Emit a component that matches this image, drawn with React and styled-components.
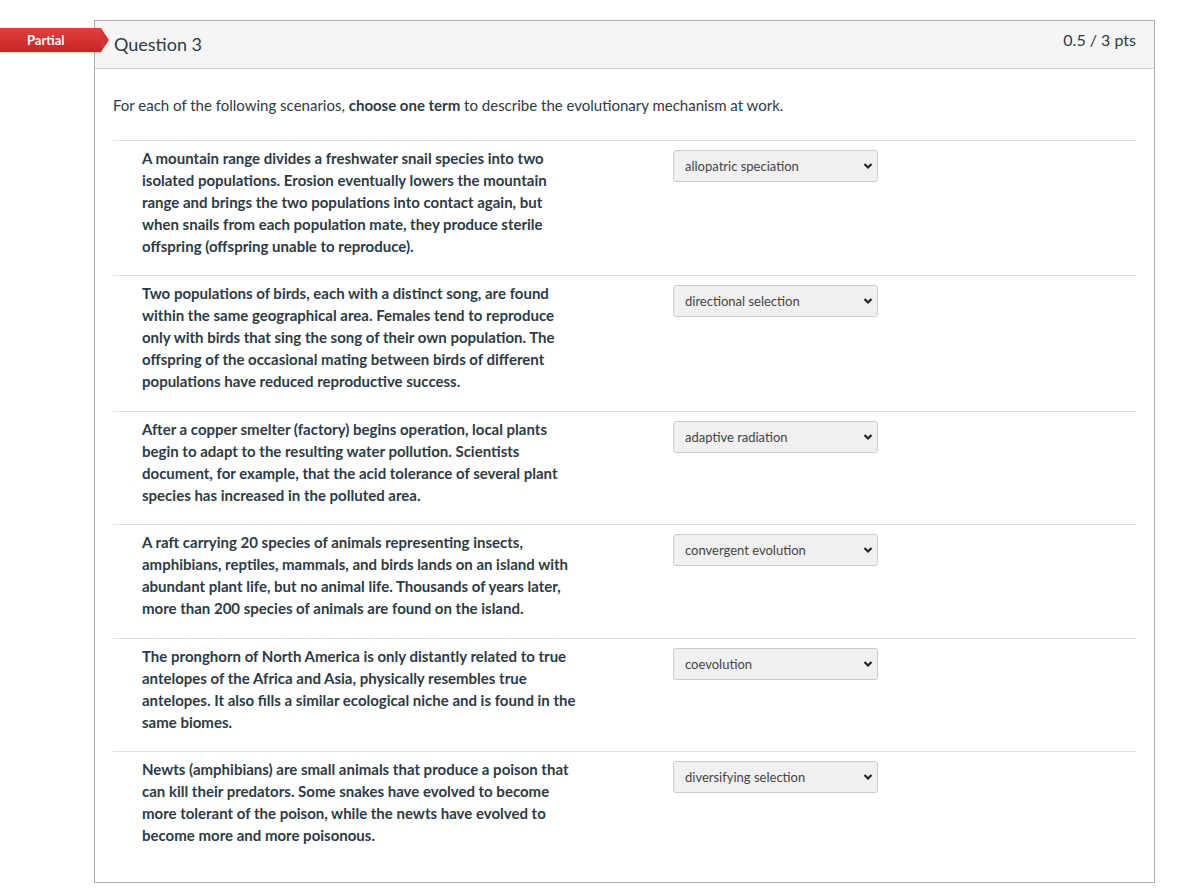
import React from 'react';
import styled, { createGlobalStyle } from 'styled-components';

const Global = createGlobalStyle`
  body {
    margin: 0;
    background: #fff;
    font-family: Lato, "Liberation Sans", sans-serif;
    color: #2d3b45;
  }
`;

const Page = styled.div`
  padding: 20px 32px 8px 94px;
`;

const Card = styled.div`
  position: relative;
  width: 1061px;
  box-sizing: border-box;
  border: 1px solid #a5afb5;
  background: #fff;
`;

const Badge = styled.div`
  position: absolute;
  left: -95px;
  top: 7px;
  width: 101px;
  height: 24px;
  background: linear-gradient(#e2403f, #c72626);
  color: #fff;
  font-size: 13px;
  font-weight: 700;
  display: flex;
  align-items: center;
  padding-left: 27px;
  box-sizing: border-box;
  box-shadow: 0 1px 2px rgba(0, 0, 0, 0.25);
  &::after {
    content: '';
    position: absolute;
    right: -8px;
    top: 0;
    border-top: 12px solid transparent;
    border-bottom: 12px solid transparent;
    border-left: 8px solid #d53434;
  }
`;

const Header = styled.div`
  height: 47px;
  background: #f5f5f5;
  border-bottom: 1px solid #c7cdd1;
  display: flex;
  align-items: center;
  justify-content: space-between;
  padding: 0 18px 0 19px;
`;

const Title = styled.div`
  font-size: 18px;
  margin-top: -1px;
`;

const Points = styled.div`
  font-size: 16px;
  color: #2d3b45;
  margin-top: -10px;
`;

const Body = styled.div`
  padding: 26px 18px 36px 18px;
`;

const Intro = styled.div`
  font-size: 15px;
  line-height: 20px;
  margin-bottom: 25px;
  b {
    font-weight: 700;
  }
`;

const Row = styled.div`
  display: flex;
  align-items: flex-start;
  border-top: 1px solid #dde1e3;
  padding: 6px 0 ${p => (p.last ? 0 : 18.4)}px 29px;
`;

const Scenario = styled.div`
  width: 437px;
  font-size: 15px;
  font-weight: 700;
  line-height: 22px;
  color: #2d3b45;
`;

const SelectBox = styled.div`
  margin-left: 94px;
  margin-top: 3px;
  width: 205px;
  height: 32px;
  box-sizing: border-box;
  border: 1px solid #c7cdd1;
  border-radius: 3px;
  background: #f0f0f0;
  display: flex;
  align-items: center;
  justify-content: space-between;
  padding: 0 4px 0 11px;
  font-size: 13px;
  color: #444;
`;

const Chevron = () => (
  <svg width="10" height="8" viewBox="0 0 10 8">
    <path d="M1.5 2 L5 5.5 L8.5 2" fill="none" stroke="#222" strokeWidth="2.2" />
  </svg>
);

const rows = [
  {
    text: 'A mountain range divides a freshwater snail species into two isolated populations. Erosion eventually lowers the mountain range and brings the two populations into contact again, but when snails from each population mate, they produce sterile offspring (offspring unable to reproduce).',
    answer: 'allopatric speciation',
  },
  {
    text: 'Two populations of birds, each with a distinct song, are found within the same geographical area. Females tend to reproduce only with birds that sing the song of their own population. The offspring of the occasional mating between birds of different populations have reduced reproductive success.',
    answer: 'directional selection',
  },
  {
    text: 'After a copper smelter (factory) begins operation, local plants begin to adapt to the resulting water pollution. Scientists document, for example, that the acid tolerance of several plant species has increased in the polluted area.',
    answer: 'adaptive radiation',
  },
  {
    text: 'A raft carrying 20 species of animals representing insects, amphibians, reptiles, mammals, and birds lands on an island with abundant plant life, but no animal life. Thousands of years later, more than 200 species of animals are found on the island.',
    answer: 'convergent evolution',
  },
  {
    text: 'The pronghorn of North America is only distantly related to true antelopes of the Africa and Asia, physically resembles true antelopes. It also fills a similar ecological niche and is found in the same biomes.',
    answer: 'coevolution',
  },
  {
    text: 'Newts (amphibians) are small animals that produce a poison that can kill their predators. Some snakes have evolved to become more tolerant of the poison, while the newts have evolved to become more and more poisonous.',
    answer: 'diversifying selection',
  },
];

export default function App() {
  return (
    <Page>
      <Global />
      <Card>
        <Badge>Partial</Badge>
        <Header>
          <Title>Question 3</Title>
          <Points>0.5 / 3 pts</Points>
        </Header>
        <Body>
          <Intro>
            For each of the following scenarios, <b>choose one term</b> to describe the evolutionary mechanism at work.
          </Intro>
          {rows.map((r, i) => (
            <Row key={i} last={i === rows.length - 1}>
              <Scenario>{r.text}</Scenario>
              <SelectBox>
                <span>{r.answer}</span>
                <Chevron />
              </SelectBox>
            </Row>
          ))}
        </Body>
      </Card>
    </Page>
  );
}
